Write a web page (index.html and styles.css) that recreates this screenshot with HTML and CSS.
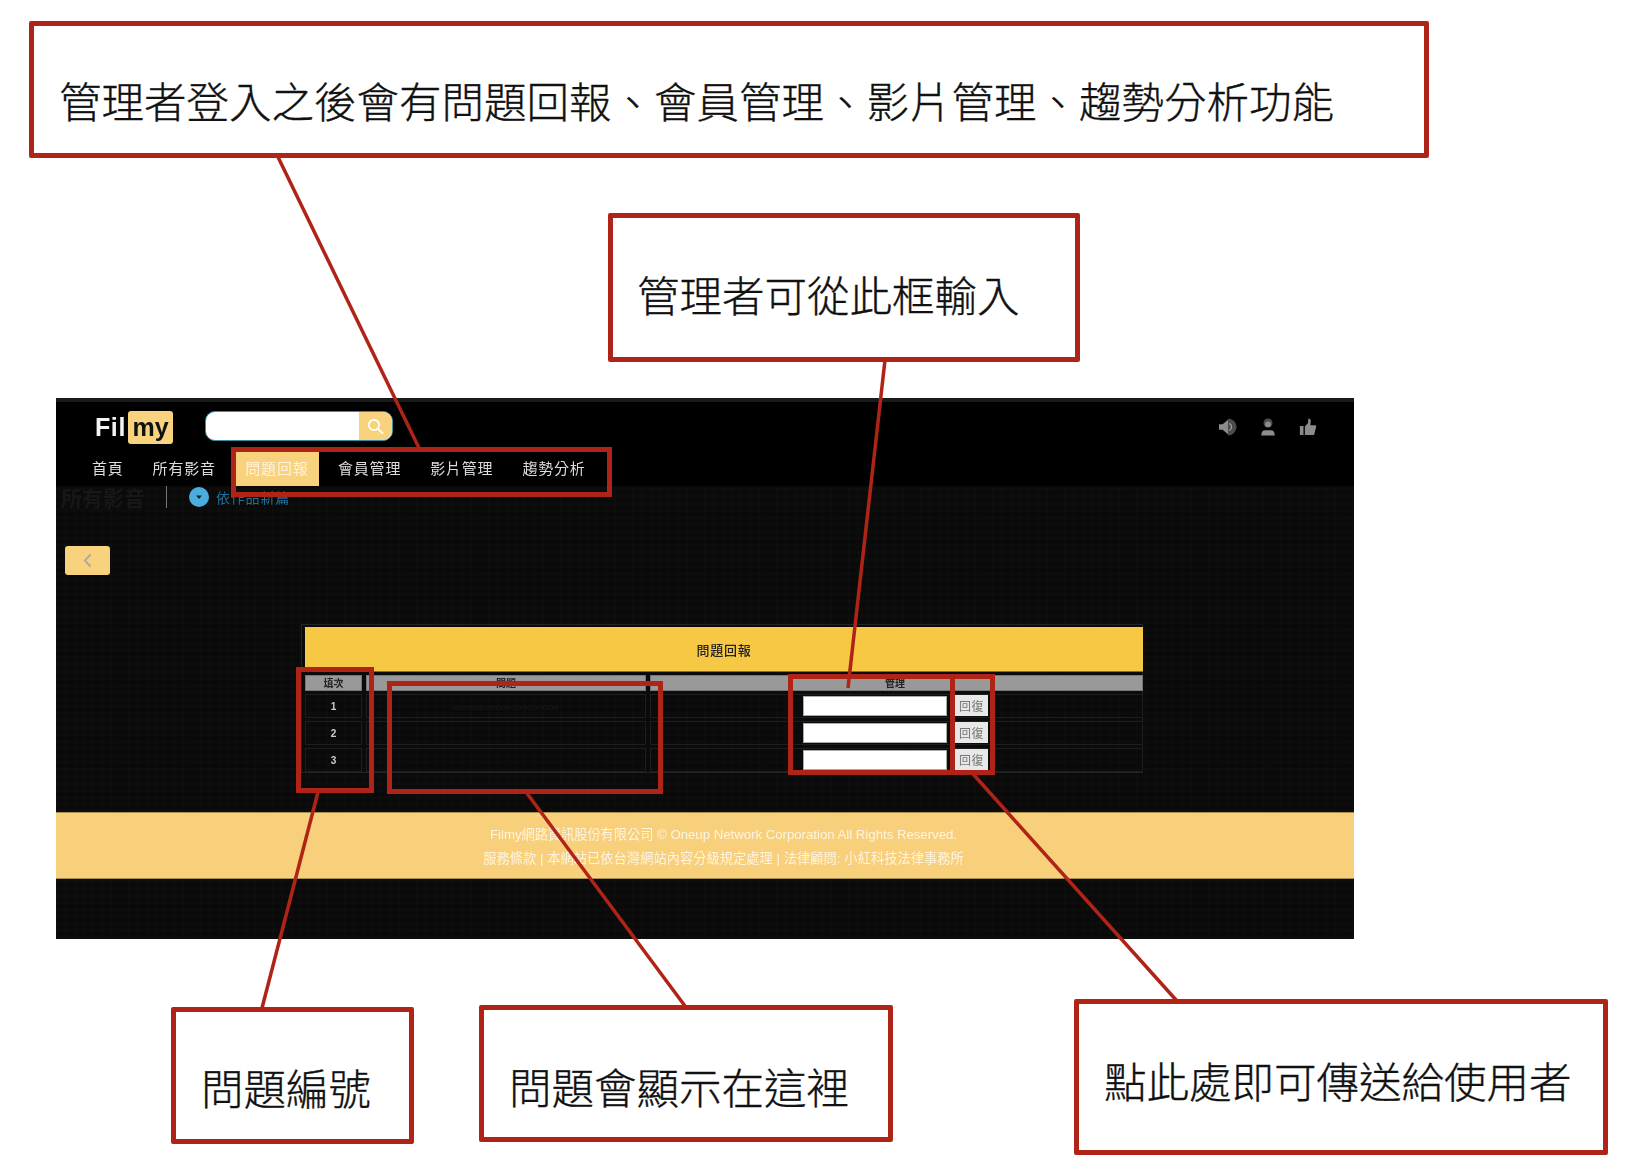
FILE: index.html
```html
<!DOCTYPE html>
<html lang="zh-Hant">
<head>
<meta charset="utf-8">
<title>Filmy 管理者功能說明</title>
<link rel="stylesheet" href="styles.css">
</head>
<body>
<main class="canvas">
  <section class="app">
    <header class="app-head">
      <div class="brand-row">
        <div class="logo"><span class="logo-fil">Fil</span><span class="logo-my">my</span></div>
        <div class="search">
          <div class="search-input"></div>
          <div class="search-btn">
            <svg viewBox="0 0 24 24" class="search-icon"><circle cx="10" cy="10" r="6.5"/><path d="M15 15l6.5 6"/></svg>
          </div>
        </div>
        <div class="head-icons">
          <svg viewBox="0 0 20 20" class="hicon"><path class="fill" d="M0 7h4l6-5v16l-6-5H0z"/><path class="dim" d="M10 .5a9.500 9.500 0 0 1 0 19z"/><path class="line" d="M11.500 6a4.500 4.500 0 0 1 0 8"/></svg>
          <svg viewBox="0 0 20 20" class="hicon"><circle class="dim" cx="10" cy="5.500" r="5"/><circle class="fill" cx="10" cy="7" r="3.200"/><path class="fill" d="M2.500 19.500q0-6 4.500-6h6q4.500 0 4.500 6z"/></svg>
          <svg viewBox="0 0 20 20" class="hicon"><path class="fill" d="M1 9h4v10H1zM6.500 9.500l3.500-4 .5-5q3 0 2.500 4l-.5 3.500h5.500q1.500 0 1 2l-2 8q-.3 1-1.500 1H6.500z"/></svg>
        </div>
      </div>
      <nav class="nav">
        <a class="nav-item">首頁</a>
        <a class="nav-item">所有影音</a>
        <a class="nav-item is-active">問題回報</a>
        <a class="nav-item">會員管理</a>
        <a class="nav-item">影片管理</a>
        <a class="nav-item">趨勢分析</a>
      </nav>
    </header>
    <div class="app-body">
      <div class="sub-bar">
        <span class="sub-title">所有影音</span>
        <span class="sub-rule"></span>
        <span class="sub-dot"><svg viewBox="0 0 10 10"><path d="M2 3.500h6L5 7z"/></svg></span>
        <span class="sub-link">依作品新篇</span>
      </div>
      <button class="back" type="button"><svg viewBox="0 0 12 20"><path d="M10 2L2.500 10l7.500 8"/></svg></button>
      <div class="table-wrap">
        <div class="table-title">問題回報</div>
        <div class="trow thead">
          <div class="tcell c1">填次</div>
          <div class="tcell c2">問題</div>
          <div class="tcell c3"><span class="mgr">管理</span></div>
        </div>
        <div class="trow">
          <div class="tcell c1">1</div>
          <div class="tcell c2"><span class="ghost">oooooooooooooooooooo</span></div>
          <div class="tcell c3"><span class="reply-input"></span><span class="reply-btn">回復</span></div>
        </div>
        <div class="trow">
          <div class="tcell c1">2</div>
          <div class="tcell c2"></div>
          <div class="tcell c3"><span class="reply-input"></span><span class="reply-btn">回復</span></div>
        </div>
        <div class="trow">
          <div class="tcell c1">3</div>
          <div class="tcell c2"></div>
          <div class="tcell c3"><span class="reply-input"></span><span class="reply-btn">回復</span></div>
        </div>
      </div>
      <footer class="foot">
        <p>Filmy網路資訊股份有限公司 © Oneup Network Corporation All Rights Reserved.</p>
        <p>服務條款 | 本網站已依台灣網站內容分級規定處理 | 法律顧問: 小紅科技法律事務所</p>
      </footer>
    </div>
  </section>

  <svg class="leaders" viewBox="0 0 1640 1172">
    <line x1="278" y1="157" x2="420" y2="450"/>
    <line x1="885" y1="360" x2="848" y2="688"/>
    <line x1="318" y1="792" x2="262" y2="1008"/>
    <line x1="526" y1="792" x2="685" y2="1006"/>
    <line x1="973" y1="774" x2="1177" y2="1001"/>
  </svg>

  <div class="mark mark-nav"></div>
  <div class="mark mark-num"></div>
  <div class="mark mark-q"></div>
  <div class="mark mark-input"></div>
  <div class="mark mark-send"></div>

  <div class="note note-1"><span>管理者登入之後會有問題回報<span class="punct">、</span>會員管理<span class="punct">、</span>影片管理<span class="punct">、</span>趨勢分析功能</span></div>
  <div class="note note-2">管理者可從此框輸入</div>
  <div class="note note-3">問題編號</div>
  <div class="note note-4">問題會顯示在這裡</div>
  <div class="note note-5">點此處即可傳送給使用者</div>
</main>
</body>
</html>
```
FILE: styles.css
```css
* { box-sizing: border-box; }
html, body { margin: 0; padding: 0; background: #fff; }
body { font-family: "Noto Sans CJK TC", "Liberation Sans", sans-serif; }
.canvas { position: relative; width: 1640px; height: 1172px; overflow: hidden; }

/* embedded screenshot */
.app {
  position: absolute; left: 56px; top: 398px; width: 1298px; height: 541px;
  background: #000; display: flex; flex-direction: column;
  border-top: 4px solid #1a1a1a; filter: blur(.55px); color: #fff;
}
.app-head { height: 84px; background: #000; flex: none; }
.brand-row { display: flex; align-items: flex-start; padding: 9px 0 0 39px; height: 50px; }
.logo { display: flex; align-items: center; height: 33px; font-family: "Liberation Sans", sans-serif; font-weight: 700; font-size: 25px; }
.logo-fil { width: 33px; color: #f4f4f4; letter-spacing: .6px; }
.logo-my { width: 45px; height: 33px; line-height: 33px; text-align: center; background: #f9d27d; color: #111; border-radius: 3px; }
.search {
  display: flex; margin-left: 32px; width: 188px; height: 30px; border-radius: 10px;
  overflow: hidden; border: 1.500px solid #3d8ca5; background: #fff;
}
.search-input { flex: 1; }
.search-btn { width: 33px; background: #f9d27d; display: flex; align-items: center; justify-content: center; }
.search-icon { width: 19px; height: 19px; fill: none; stroke: #fff; stroke-width: 2.200; }
.head-icons { margin-left: auto; margin-right: 37px; display: flex; gap: 22px; padding-top: 7px; }
.hicon { width: 18px; height: 18px; }
.hicon .fill { fill: #8a8c90; }
.hicon .dim { fill: #4c4c4c; }
.hicon .line { fill: none; stroke: #999; stroke-width: 1.500; }

.nav { display: flex; align-items: stretch; height: 34px; padding-left: 26px; gap: 9px; }
.nav-item { padding: 0 10px; font-size: 15px; letter-spacing: .8px; line-height: 32px; color: #ddd; white-space: nowrap; }
.nav-item.is-active { background: #f9d27d; color: #fff2d8; padding: 0 10.500px; }

.app-body {
  flex: 1; display: flex; flex-direction: column; position: relative;
  background-color: #0a0a0a;
  background-image:
    repeating-linear-gradient(0deg, rgba(255,255,255,.007) 0 3px, transparent 3px 7px),
    repeating-linear-gradient(90deg, rgba(255,255,255,.007) 0 2px, transparent 2px 9px);
}
.sub-bar { display: flex; align-items: center; height: 22px; padding-left: 5px; flex: none; }
.sub-title { width: 105px; color: #171717; font-size: 21px; font-weight: 700; line-height: 22px; white-space: nowrap; }
.sub-rule { width: 1px; height: 22px; background: #777; }
.sub-dot { width: 20px; height: 20px; margin-left: 22px; border-radius: 50%; background: #4aaddc; display: flex; align-items: center; justify-content: center; }
.sub-dot svg { width: 10px; height: 10px; fill: #123; }
.sub-link { margin-left: 7px; font-size: 14px; letter-spacing: .8px; color: #1f7199; white-space: nowrap; }
.back {
  margin: 38px 0 0 9px; width: 45px; height: 29px; flex: none; padding: 0; border: 0;
  border-radius: 3px; background: #f9d27d; display: flex; align-items: center; justify-content: center;
}
.back svg { width: 9px; height: 15px; fill: none; stroke: #a8aab0; stroke-width: 2.500; }

.table-wrap {
  margin: 49px 0 0 245px; width: 842px; height: 149px; padding: 2px 0 0 3px; flex: none;
  border: 1px solid #242424; display: flex; flex-direction: column; gap: 3px;
}
.table-title {
  width: 838px; height: 45px; background: #f7c844; border-bottom: 1px solid #8a7020;
  color: #222; font-size: 13px; font-weight: 500; letter-spacing: .8px;
  display: flex; align-items: center; justify-content: center; flex: none;
}
.trow { display: flex; gap: 4px; height: 24px; width: 838px; flex: none; }
.trow.thead { height: 16px; }
.tcell {
  border: 1px solid #1e1e1e; display: flex; align-items: center; justify-content: center;
  font-family: "Liberation Sans", "Noto Sans CJK TC", sans-serif; font-size: 10px; font-weight: 700; color: #ccc;
}
.c1 { width: 57px; }
.c2 { width: 280px; }
.c3 { width: 493px; justify-content: flex-start; padding-left: 152px; gap: 8px; position: relative; }
.thead .tcell { background: #999; border-color: #777; color: #222; font-size: 10px; line-height: 13px; }
.thead .c3 { padding-left: 234px; }
.mgr { display: block; }
.ghost { color: #191919; font-family: "Liberation Serif", serif; font-weight: 400; font-size: 10.500px; }
.reply-input { width: 144px; height: 20px; background: #fff; border: 1px solid #aaa; }
.reply-btn { width: 33px; height: 21px; margin-top: -2px; background: #e8e8e8; color: #777; font-size: 12px; font-weight: 400; display: flex; align-items: center; justify-content: center; letter-spacing: .4px; white-space: nowrap; }

.foot {
  margin-top: 39px; height: 67px; background: #f8d07c; flex: none;
  border-top: 1px solid #a8914f; border-bottom: 1px solid #a8914f;
  display: flex; flex-direction: column; align-items: center; padding: 11px 0 0 37px; gap: 3px;
  font-family: "Liberation Sans", "Noto Sans CJK TC", sans-serif; font-size: 13.200px; color: rgba(255,255,255,.76);
}
.foot p { margin: 0; line-height: 21px; white-space: nowrap; }
.foot p + p { letter-spacing: .08px; }

/* annotations */
.leaders { position: absolute; inset: 0; width: 1640px; height: 1172px; }
.leaders line { stroke: #b02418; stroke-width: 3.500; }
.mark { position: absolute; border: 5px solid #b02418; }
.mark-nav { left: 231px; top: 447px; width: 381px; height: 50px; }
.mark-num { left: 296px; top: 667px; width: 78px; height: 126px; }
.mark-q { left: 387px; top: 681px; width: 276px; height: 113px; }
.mark-input { left: 788px; top: 674px; width: 167px; height: 101px; }
.mark-send { left: 950px; top: 674px; width: 45px; height: 101px; }
.note {
  position: absolute; background: #fff; border: 5px solid #b02418; border-radius: 2px;
  color: #111; font-size: 42.500px; font-weight: 300; -webkit-text-stroke: .35px #111; line-height: 60px; white-space: nowrap;
  display: flex; align-items: center;
}
.punct { font-family: "Noto Sans CJK SC", sans-serif; }
.note-1 { left: 29px; top: 21px; width: 1400px; height: 137px; padding: 21px 0 0 25px; }
.note-2 { left: 608px; top: 213px; width: 472px; height: 149px; padding: 12px 0 0 24px; }
.note-3 { left: 171px; top: 1007px; width: 243px; height: 137px; padding: 22px 0 0 25px; }
.note-4 { left: 479px; top: 1005px; width: 414px; height: 137px; padding: 24px 0 0 25px; }
.note-5 { left: 1074px; top: 999px; width: 534px; height: 156px; padding: 5px 0 0 25px; }
```
